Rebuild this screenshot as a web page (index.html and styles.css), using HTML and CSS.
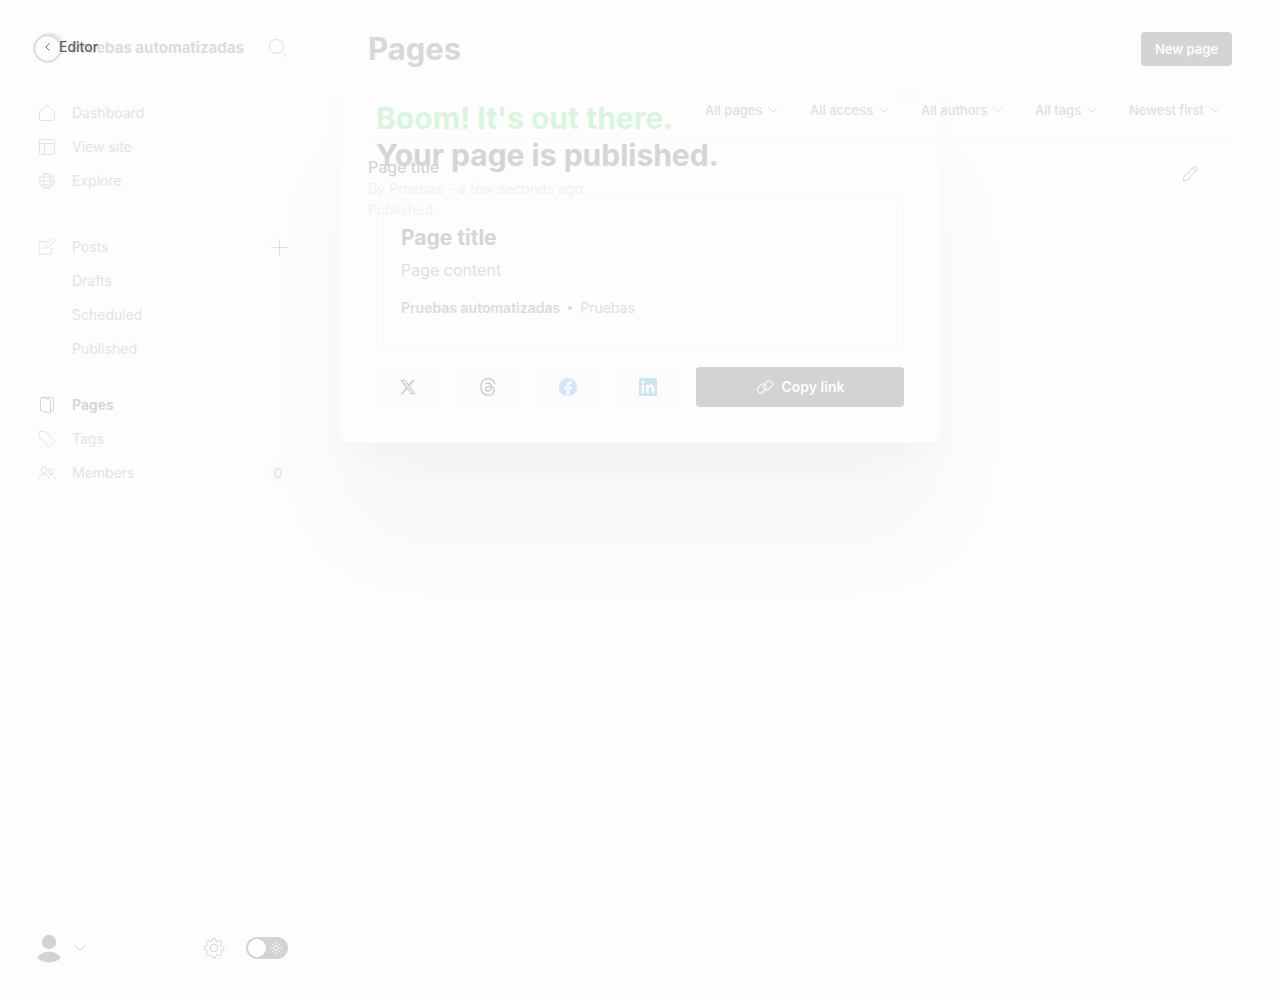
FILE: index.html
```html
<!DOCTYPE html>
<html lang="en">
<head>
<meta charset="utf-8">
<meta name="viewport" content="width=device-width, initial-scale=1">
<title>Pages</title>
<link rel="stylesheet" href="styles.css">
</head>
<body>
<div class="app">
  <aside class="sidebar">
    <header class="brand">
      <svg class="brand-logo" width="32" height="32" viewBox="0 0 32 32"><circle cx="18" cy="14.500" r="12.500" stroke="#ececec" stroke-width="3"/><circle cx="15.500" cy="16.500" r="13.200" fill="#fdfdfd" stroke="#e0e0e0" stroke-width="2.600"/></svg>
      <span class="brand-name">Pruebas automatizadas</span>
      <button class="icon-button" type="button" aria-label="Search">
        <svg width="20" height="20" viewBox="0 0 20 20"><circle cx="8.500" cy="8.500" r="7"/><path d="M13.500 13.500l5.500 5.500"/></svg>
      </button>
      <a class="editor-link" href="#editor">
        <svg width="5" height="8" viewBox="0 0 5 8"><path d="M4.300.6L.8 4l3.500 3.400"/></svg>
        <span>Editor</span>
      </a>
    </header>

    <nav class="nav">
      <ul class="nav-group">
        <li><a href="#dashboard"><svg width="18" height="18" viewBox="0 0 18 18"><path d="M1.500 7.300L9 1l7.500 6.300v8.200a1 1 0 0 1-1 1h-13a1 1 0 0 1-1-1z"/></svg>Dashboard</a></li>
        <li><a href="#site"><svg width="18" height="18" viewBox="0 0 18 18"><rect x="1.500" y="1.500" width="15" height="15" rx="1"/><path d="M1.500 5.500h15M6.500 5.500v11"/></svg>View site</a></li>
        <li><a href="#explore"><svg width="18" height="18" viewBox="0 0 18 18"><circle cx="9" cy="9" r="7.500"/><ellipse cx="9" cy="9" rx="3.700" ry="7.500"/><path d="M1.500 9h15M2.700 5h12.600M2.700 13h12.600"/></svg>Explore</a></li>
      </ul>
      <ul class="nav-group nav-posts">
        <li><a href="#posts"><svg width="18" height="18" viewBox="0 0 18 18"><path d="M9 3.500H2a1 1 0 0 0-1 1V15a1 1 0 0 0 1 1h10.500a1 1 0 0 0 1-1v-5"/><path d="M7 10.500l.7-3L14.300 1a1.300 1.300 0 0 1 2 2L9.800 9.700z"/></svg>Posts</a>
          <button class="icon-button" type="button" aria-label="New post"><svg width="18" height="18" viewBox="0 0 18 18"><path d="M9.500 1v16.500M1 9.500h17"/></svg></button></li>
        <li><a class="sub" href="#drafts">Drafts</a></li>
        <li><a class="sub" href="#scheduled">Scheduled</a></li>
        <li><a class="sub" href="#published">Published</a></li>
      </ul>
      <ul class="nav-group">
        <li><a class="active" href="#pages"><svg width="18" height="18" viewBox="0 0 18 18"><path d="M3.500 1.500h11a1 1 0 0 1 1 1v11a1 1 0 0 1-1 1h-2M3.500 1.500l8 2a1 1 0 0 1 1 1V16a1 1 0 0 1-1 1l-8-2a1 1 0 0 1-1-1V2.500a1 1 0 0 1 1-1z"/></svg>Pages</a></li>
        <li><a href="#tags"><svg width="18" height="18" viewBox="0 0 18 18"><path d="M2 1.500h5.500l8.600 8.600a1.200 1.200 0 0 1 0 1.600l-4.500 4.500a1.200 1.200 0 0 1-1.600 0L1 7V2.500a1 1 0 0 1 1-1z"/></svg>Tags</a></li>
        <li><a href="#members"><svg width="18" height="18" viewBox="0 0 18 18"><circle cx="6" cy="6" r="3"/><path d="M1 15c.3-3.500 2.300-5 5-5s4.700 1.500 5 5"/><circle cx="13" cy="7.500" r="2.300"/><path d="M12 10.700c3-.5 4.700 1.300 5 4.300"/></svg>Members</a><span class="count">0</span></li>
      </ul>
    </nav>

    <footer class="sidebar-footer">
      <button class="account" type="button" aria-label="Account">
        <svg class="avatar" width="26" height="30" viewBox="0 0 26 30"><circle cx="13" cy="9" r="7.200"/><path d="M1 24.500c6-8 18-8 24 0-6 6.500-18 6.500-24 0z"/></svg>
        <svg width="12" height="8" viewBox="0 0 12 8"><path d="M.7 1.200L6 6.700l5.300-5.500"/></svg>
      </button>
      <a class="settings" href="#settings" aria-label="Settings">
        <svg width="22" height="22" viewBox="0 0 22 22"><circle cx="11" cy="11" r="3.900"/><path d="M9.600 1.500h2.800l.7 2.500 1.700.7L17 3.400l2 2-1.400 2.400.7 1.700 2.600.6v2.800l-2.600.7-.7 1.600L19 17l-2 2-2.300-1.300-1.600.7-.7 2.600H9.600l-.7-2.600-1.700-.7L5 19l-2-2 1.300-2.200-.7-1.600-2.500-.7V9.700l2.500-.6.7-1.700L3 5.400l2-2 2.200 1.300 1.700-.7z"/></svg>
      </a>
      <label class="theme">
        <input type="checkbox" aria-label="Night shift">
        <svg width="14" height="14" viewBox="0 0 14 14"><circle cx="7" cy="7" r="2.500"/><path d="M7 .8v2M7 11.200v2M.8 7h2M11.200 7h2M2.600 2.600L4 4M10 10l1.400 1.400M2.600 11.400L4 10M10 4l1.400-1.400"/></svg>
      </label>
    </footer>
  </aside>

  <main class="content">
    <header class="page-header">
      <h1>Pages</h1>
      <button class="primary" type="button">New page</button>
    </header>
    <div class="filters">
      <label class="filter"><select aria-label="Type"><option>All pages</option></select><svg width="10" height="6" viewBox="0 0 10 6"><path d="M.7.700L5 5.200 9.300.7"/></svg></label>
      <label class="filter"><select aria-label="Access"><option>All access</option></select><svg width="10" height="6" viewBox="0 0 10 6"><path d="M.7.700L5 5.200 9.300.7"/></svg></label>
      <label class="filter"><select aria-label="Author"><option>All authors</option></select><svg width="10" height="6" viewBox="0 0 10 6"><path d="M.7.700L5 5.200 9.300.7"/></svg></label>
      <label class="filter"><select aria-label="Tag"><option>All tags</option></select><svg width="10" height="6" viewBox="0 0 10 6"><path d="M.7.700L5 5.200 9.300.7"/></svg></label>
      <label class="filter"><select aria-label="Order"><option>Newest first</option></select><svg width="10" height="6" viewBox="0 0 10 6"><path d="M.7.700L5 5.200 9.300.7"/></svg></label>
    </div>
    <ul class="posts">
      <li class="post">
        <div>
          <h2>Page title</h2>
          <p>By Pruebas - a few seconds ago</p>
          <p>Published</p>
        </div>
        <a class="edit" href="#edit" aria-label="Edit page"><svg width="16" height="16" viewBox="0 0 16 16"><path d="M1 15l1-4.500L11.500 1.200a1.700 1.700 0 0 1 2.600 0l.7.700a1.700 1.700 0 0 1 0 2.500L5.500 13.800zM10.500 2.200l3.300 3.300"/></svg></a>
      </li>
    </ul>
  </main>
</div>

<div class="modal-layer">
  <section class="modal" role="dialog" aria-labelledby="modal-title">
    <button class="close" type="button" aria-label="Close"><svg width="16" height="16" viewBox="0 0 16 16"><path d="M.5.500l15 15M15.500.5l-15 15"/></svg></button>
    <h2 id="modal-title"><span>Boom! It's out there.</span><br>Your page is published.</h2>
    <a class="preview" href="#page">
      <h3>Page title</h3>
      <p class="excerpt">Page content</p>
      <p class="meta"><strong>Pruebas automatizadas</strong><i></i>Pruebas</p>
    </a>
    <div class="share">
      <a href="#x" aria-label="Share on X"><svg width="18" height="18" viewBox="0 0 24 24" class="dark"><path d="M18.200 2.200h3.300l-7.200 8.300 8.500 11.200h-6.700l-5.200-6.800-6 6.800H1.700l7.700-8.800L1.300 2.200h6.800l4.700 6.200zm-1.200 17.600h1.900L7.100 4.100h-2z"/></svg></a>
      <a href="#threads" aria-label="Share on Threads"><svg width="18" height="18" viewBox="0 0 192 192" class="dark"><path d="M141.537 88.988a66.667 66.667 0 0 0-2.518-1.143c-1.482-27.307-16.403-42.940-41.457-43.100h-.34c-14.986 0-27.449 6.396-35.120 18.036l13.779 9.452c5.730-8.695 14.724-10.548 21.348-10.548h.229c8.249.053 14.474 2.452 18.503 7.129 2.932 3.405 4.893 8.111 5.864 14.050-7.314-1.243-15.224-1.626-23.680-1.140-23.820 1.371-39.134 15.264-38.105 34.568.522 9.792 5.400 18.216 13.735 23.719 7.047 4.652 16.124 6.927 25.557 6.412 12.458-.683 22.231-5.436 29.049-14.127 5.178-6.600 8.453-15.153 9.899-25.930 5.937 3.583 10.337 8.298 12.767 13.966 4.132 9.635 4.373 25.468-8.546 38.376-11.319 11.308-24.925 16.200-45.488 16.351-22.809-.169-40.060-7.484-51.275-21.742C35.236 139.966 29.808 120.682 29.605 96c.203-24.682 5.630-43.966 16.133-57.317C56.954 24.425 74.204 17.110 97.013 16.940c22.975.17 40.526 7.520 52.171 21.847 5.710 7.026 10.015 15.860 12.853 26.162l16.147-4.308c-3.440-12.680-8.853-23.606-16.219-32.668C147.036 9.607 125.202.195 97.070 0h-.113C68.882.194 47.292 9.642 32.788 28.080 19.882 44.485 13.224 67.315 13.001 95.932L13 96v.067c.224 28.617 6.882 51.447 19.788 67.854C47.292 182.358 68.882 191.806 96.957 192h.113c24.960-.173 42.554-6.708 57.048-21.189 18.963-18.945 18.392-42.692 12.142-57.270-4.484-10.454-13.033-18.945-24.723-24.553zM98.440 129.507c-10.440.588-21.286-4.098-21.820-14.135-.397-7.442 5.296-15.746 22.461-16.735 1.966-.114 3.895-.169 5.790-.169 6.235 0 12.068.606 17.371 1.765-1.978 24.702-13.580 28.713-23.802 29.274z"/></svg></a>
      <a href="#facebook" aria-label="Share on Facebook"><svg width="18" height="18" viewBox="0 0 24 24" class="facebook"><path d="M24 12.070C24 5.400 18.600 0 12 0S0 5.400 0 12.070c0 6 4.400 10.980 10.100 11.880v-8.400H7.100v-3.480h3V9.400c0-3 1.800-4.670 4.500-4.670 1.300 0 2.700.24 2.700.24v2.950h-1.500c-1.500 0-2 .93-2 1.880v2.270h3.400l-.5 3.480h-2.900v8.400C19.600 23.050 24 18.070 24 12.070z"/></svg></a>
      <a href="#linkedin" aria-label="Share on LinkedIn"><svg width="18" height="18" viewBox="0 0 24 24" class="linkedin"><path d="M20.450 20.450h-3.560v-5.570c0-1.330-.02-3.040-1.850-3.040-1.850 0-2.140 1.450-2.140 2.940v5.670H9.350V9h3.410v1.560h.05c.48-.9 1.640-1.850 3.370-1.850 3.600 0 4.270 2.370 4.270 5.460zM5.340 7.430a2.060 2.060 0 1 1 0-4.120 2.060 2.060 0 0 1 0 4.120zM7.120 20.450H3.560V9h3.560zM22.200 0H1.800C.8 0 0 .8 0 1.700v20.600c0 .9.800 1.700 1.800 1.700h20.400c1 0 1.800-.8 1.800-1.700V1.700C24 .8 23.200 0 22.200 0z"/></svg></a>
      <button class="copy" type="button"><svg width="18" height="16" viewBox="0 0 18 16"><rect x="-5" y="-3.200" width="10" height="6.400" rx="3.200" transform="translate(6 9.500) rotate(-50)"/><rect x="-5" y="-3.200" width="10" height="6.400" rx="3.200" transform="translate(12 6.500) rotate(-50)"/></svg>Copy link</button>
    </div>
  </section>
</div>
</body>
</html>
```
FILE: styles.css
```css
* { box-sizing: border-box; }

body {
  margin: 0;
  background: #fdfdfd;
  color: #d5d5d5;
  font: 14px/20px Inter, "Liberation Sans", sans-serif;
}

h1, h2, h3, p, ul { margin: 0; padding: 0; }
ul { list-style: none; }
a { color: inherit; text-decoration: none; }
button, select { font: inherit; color: inherit; border: 0; padding: 0; background: none; }
svg { display: block; flex: none; fill: none; stroke: currentColor; }

.app {
  position: relative;
  z-index: 1;
  display: flex;
  min-height: 100vh;
  pointer-events: none;
}

/* Sidebar */
.sidebar {
  display: flex;
  flex-direction: column;
  width: 320px;
  flex: none;
  padding: 32px 32px 37px;
}

.brand {
  position: relative;
  display: flex;
  align-items: center;
  gap: 7px;
  height: 32px;
}

.brand-name {
  flex: 1;
  font-size: 15px;
  font-weight: 700;
  color: #dcdcdc;
  white-space: nowrap;
}

.icon-button { color: #dedede; }

.editor-link {
  position: absolute;
  top: 5px;
  left: 13px;
  display: flex;
  align-items: center;
  gap: 9px;
  color: #5d6266;
  font-weight: 500;
}

.nav { margin-top: 32px; }

.nav-group { margin-bottom: 22px; }
.nav-group:first-child { margin-bottom: 32px; }

.nav li {
  display: flex;
  align-items: center;
  justify-content: space-between;
  height: 34px;
}

.nav a {
  display: flex;
  align-items: center;
  gap: 16px;
  padding-left: 6px;
  color: #e2e4e4;
}

.nav a.sub { padding-left: 40px; }
.nav a.active { color: #d5d5d5; font-weight: 600; }

.count {
  padding: 2px 6px;
  border-radius: 12px;
  background: #fbfbfb;
  color: #e0e2e2;
  font-size: 13px;
}

.sidebar-footer {
  display: flex;
  align-items: center;
  margin-top: auto;
}

.account {
  display: flex;
  align-items: center;
  gap: 12px;
  padding-left: 4px;
}

.avatar { fill: #d3d3d3; stroke: none; }

.settings { margin-left: auto; }

.theme {
  position: relative;
  margin: 0 0 0 21px;
  height: 22px;
}

.theme input {
  display: flex;
  appearance: none;
  width: 42px;
  height: 22px;
  margin: 0;
  padding: 2px;
  border-radius: 11px;
  background: #d3d3d3;
}

.theme input::before {
  content: "";
  width: 18px;
  height: 18px;
  border-radius: 50%;
  background: #fdfdfd;
}

.theme svg {
  position: absolute;
  top: 4px;
  right: 5px;
  color: #f8f8f8;
}

/* Page list */
.content {
  flex: 1;
  padding: 32px 48px;
}

.page-header {
  display: flex;
  align-items: center;
  justify-content: space-between;
}

h1 {
  font-size: 31px;
  line-height: 34px;
  font-weight: 700;
  color: #d8d8d8;
}

.primary {
  height: 34px;
  padding: 0 14px;
  border-radius: 4px;
  background: #d4d4d4;
  color: #fdfdfd;
  font-size: 13px;
  font-weight: 600;
}

.filters {
  display: flex;
  justify-content: flex-end;
  gap: 32px;
  padding: 34px 12px 19px 0;
  border-bottom: 1px solid #fafafa;
}

.filter {
  display: flex;
  align-items: center;
  gap: 5px;
  color: #dfe1e1;
}

.filter select {
  appearance: none;
  font-size: 13px;
  font-weight: 500;
}

.post {
  display: flex;
  justify-content: space-between;
  padding-top: 17px;
}

.post h2 {
  margin-bottom: 1px;
  font-size: 16px;
  line-height: 20px;
  font-weight: 500;
  color: #d5d5d5;
}

.post p {
  line-height: 21px;
  color: #eff1f2;
}

.edit {
  align-self: flex-start;
  margin-top: 3px;
  padding: 6px 34px 6px 16px;
  border-left: 1px solid #fbfbfb;
}

.app a, .app button, .app select, .app input { pointer-events: auto; }

/* Publish confirmation */
.modal-layer {
  position: absolute;
  top: 0;
  right: 0;
  left: 0;
  display: flex;
  justify-content: center;
  padding: 64px 16px 0;
}

.modal {
  position: relative;
  width: 600px;
  padding: 36px;
  border-radius: 12px;
  background: #fdfdfd;
  box-shadow:
    0 6px 12px rgba(0, 0, 0, 0.008),
    0 24px 32px rgba(0, 0, 0, 0.014),
    0 96px 108px rgba(0, 0, 0, 0.026);
}

.close {
  position: absolute;
  top: 24px;
  right: 24px;
  color: #f4f4f4;
}

.modal h2 {
  font-size: 30px;
  line-height: 37px;
  font-weight: 700;
}

.modal h2 span { color: #d8f6dd; }

.preview {
  display: block;
  margin: 24px 0 16px;
  padding: 25px 24px 32px;
  border: 1px solid #fafafa;
  border-radius: 8px;
}

.preview h3 {
  font-size: 21px;
  line-height: 28px;
  font-weight: 700;
}

.excerpt {
  margin: 6px 0 16px;
  font-size: 16px;
  line-height: 24px;
  color: #e0e0e0;
}

.meta {
  display: flex;
  align-items: center;
  color: #dfe1e1;
}

.meta strong { font-weight: 600; color: #dadcdc; }

.meta i {
  width: 4px;
  height: 4px;
  margin: 0 8px;
  border-radius: 50%;
  background: #d8dada;
}

.share {
  display: flex;
  gap: 16px;
}

.share a,
.copy {
  display: flex;
  align-items: center;
  justify-content: center;
  height: 40px;
  border-radius: 4px;
}

.share a {
  width: 64px;
  background: #fbfbfb;
}

.share a svg { stroke: none; }
.share .dark { fill: #cfcfcf; }
.share .facebook { fill: #d3e4fb; }
.share .linkedin { fill: #cde5f1; }

.copy {
  flex: 1;
  gap: 8px;
  background: #d3d3d3;
  color: #fdfdfd;
  font-weight: 600;
}
```
